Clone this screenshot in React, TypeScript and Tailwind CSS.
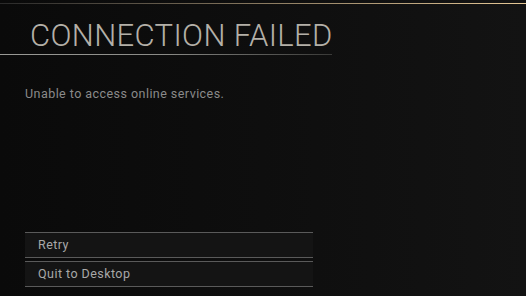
export default function App() {
  return (
    <div className="relative flex h-[296px] w-[526px] flex-col overflow-hidden bg-gradient-to-r from-[#0a0a0a] via-[#0e0e0e] to-[#131313] font-['Roboto',sans-serif]">
      {/* top accent line */}
      <div className="mt-[3px] h-px w-full bg-gradient-to-r from-[#2a2a2a] via-[#8a7a60] to-[#e6c896]" />

      {/* title */}
      <div className="relative mt-[15px] w-[332px]">
        <h1 className="whitespace-nowrap pl-[30px] text-[31px] font-light leading-[34px] tracking-[0.35px] text-[#b4b0a8]">
          CONNECTION FAILED
        </h1>
        <div className="mt-px h-px w-full bg-gradient-to-r from-[#9a9a96] via-[#8a8a86] to-[#3a3a38]" />
      </div>

      {/* message */}
      <p className="ml-[25px] mt-[31px] whitespace-nowrap text-[12.5px] leading-[15px] tracking-[0.45px] text-[#8a8a8a]">
        Unable to access online services.
      </p>

      {/* actions */}
      <div className="ml-[25px] mt-[131px] flex w-[288px] flex-col gap-[3px]">
        {["Retry", "Quit to Desktop"].map((label) => (
          <button
            key={label}
            type="button"
            className="flex h-[26px] items-center border-y border-[#5a5a5a] bg-[#141414] pl-[13px] text-left text-[12.5px] tracking-[0.45px] text-[#a8a8a8]"
          >
            {label}
          </button>
        ))}
      </div>
    </div>
  );
}
